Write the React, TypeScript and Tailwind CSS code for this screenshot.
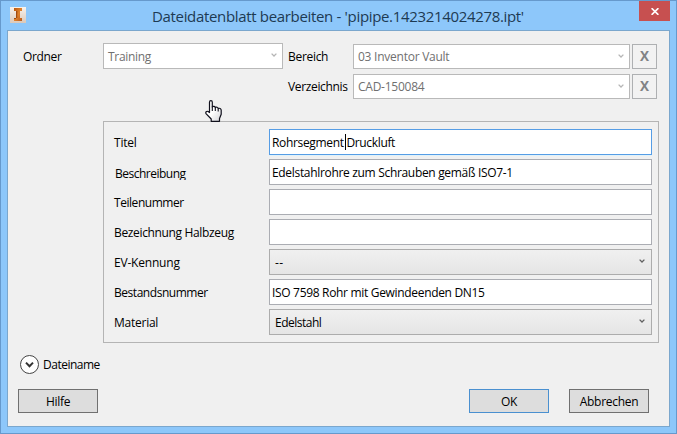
import React from "react";

function Chevron({ className }: { className: string }) {
  return (
    <svg className={`h-1 w-[6px] shrink-0 ${className}`} viewBox="0 0 6 4" fill="none" stroke="currentColor" strokeWidth="1.3">
      <path d="M0.6 0.6 3 3 5.4 0.6" />
    </svg>
  );
}

function DisabledSelect({ value, className, tracking }: { value: string; className: string; tracking: string }) {
  return (
    <div className={`flex items-center justify-between border border-[#b9b9b9] bg-white pr-[5px] pl-1 text-[#707070] ${className}`}>
      <span className={tracking}>{value}</span>
      <Chevron className="-translate-y-px text-[#b5b5b5]" />
    </div>
  );
}

function ClearButton() {
  return (
    <button className="ml-0.5 flex h-[25px] w-[25px] items-center justify-center border border-[#aeb0b2] bg-[#f2f2f2] pb-0.5 text-[13.5px] font-bold text-[#808285]">
      X
    </button>
  );
}

type Row = { label: string; labelClass: string; value: React.ReactNode; valueClass: string; kind: "focus" | "text" | "select" };

const rows: Row[] = [
  {
    label: "Titel",
    labelClass: "pt-0.5 tracking-[-0.2px]",
    value: (
      <>
        Rohrsegment <span className="relative">
          <i className="absolute top-0 -left-px h-4 w-px bg-black" />
          Druckluft
        </span>
      </>
    ),
    valueClass: "tracking-[-0.34px]",
    kind: "focus",
  },
  { label: "Beschreibung", labelClass: "mt-0.5 ml-px h-[14px] overflow-hidden leading-4 tracking-[-0.5px]", value: "Edelstahlrohre zum Schrauben gemäß ISO7-1", valueClass: "tracking-[-0.32px]", kind: "text" },
  { label: "Teilenummer", labelClass: "pt-0.5 tracking-[-0.45px]", value: "", valueClass: "", kind: "text" },
  { label: "Bezeichnung Halbzeug", labelClass: "pt-0.5 tracking-[-0.35px]", value: "", valueClass: "", kind: "text" },
  { label: "EV-Kennung", labelClass: "pt-0.5 tracking-[-0.2px]", value: "--", valueClass: "tracking-[0.5px]", kind: "select" },
  { label: "Bestandsnummer", labelClass: "pt-0.5 tracking-[-0.46px]", value: "ISO 7598 Rohr mit Gewindeenden DN15", valueClass: "tracking-[-0.32px]", kind: "text" },
  { label: "Material", labelClass: "pt-0.5 tracking-[-0.25px]", value: "Edelstahl", valueClass: "tracking-[-0.5px]", kind: "select" },
];

const fieldStyle = {
  focus: "border-[#569de5] bg-white pl-0.5 shadow-[0_1px_0_#e0f2fa]",
  text: "border-[#abadb3] bg-white pl-0.5",
  select: "border-[#acacac] bg-linear-to-b from-[#f0f0f0] to-[#e5e5e5] pl-[5px] pr-[6px]",
};

function FieldRow({ row }: { row: Row }) {
  return (
    <div className="flex h-[26px] items-center">
      <div className="w-[155px] whitespace-nowrap">
        <div className={row.labelClass}>{row.label}</div>
      </div>
      <div className={`flex h-full w-[383px] items-center justify-between border whitespace-pre ${fieldStyle[row.kind]}`}>
        <span className={`pt-0.5 ${row.valueClass}`}>{row.value}</span>
        {row.kind === "select" && <Chevron className="-translate-y-px text-[#606060]" />}
      </div>
    </div>
  );
}

function InventorIcon() {
  return (
    <svg className="mt-1.5 ml-[9px] h-4 w-4 shrink-0" viewBox="0 0 16 16">
      <defs>
        <linearGradient id="tile" x1="0" y1="0" x2="0" y2="1">
          <stop offset="0" stopColor="#f8f3ee" />
          <stop offset="1" stopColor="#dcc8b8" />
        </linearGradient>
        <linearGradient id="beam" x1="0" y1="0" x2="1" y2="1">
          <stop offset="0" stopColor="#b8560f" />
          <stop offset="0.5" stopColor="#e0822c" />
          <stop offset="1" stopColor="#b9591a" />
        </linearGradient>
      </defs>
      <rect width="16" height="16" fill="url(#tile)" />
      <path d="M4 1h8v3h-2v7h2v3H4v-3h2V4H4z" fill="url(#beam)" />
      <path d="M6 4h1.3v7H6zM4 11h2v1H4z" fill="#a04a10" />
    </svg>
  );
}

function HandCursor() {
  return (
    <svg className="absolute top-[99px] left-[204px] h-[22px] w-[17px]" viewBox="0 0 17 22">
      <defs>
        <linearGradient id="hand" x1="0" y1="0" x2="1" y2="1">
          <stop offset="0.5" stopColor="#fff" />
          <stop offset="1" stopColor="#d2d2d6" />
        </linearGradient>
      </defs>
      <path
        d="M4.5 12.5V2.2C4.5.2 7.3.2 7.3 2.2V7C8 5.8 10.2 6.2 10.3 7.6 11.2 6.6 13.1 7.2 13.2 8.6 14.4 7.8 16.2 8.6 16.2 10.2V14.2L14.5 18.5V21.3H6.2V19L1.2 13.8C.1 12.2 1.6 10.6 3.1 11.6Z"
        fill="url(#hand)"
        stroke="#10101c"
        strokeWidth="1.2"
        strokeLinejoin="round"
      />
      <path d="M7.3 6.5V11M10.3 7.5V11M13.2 8.5V11.5" stroke="#10101c" strokeWidth="1.1" />
    </svg>
  );
}

export default function App() {
  return (
    <div className="relative flex h-[434px] w-[677px] flex-col border border-[#6699cc] bg-[#8dc7fa] font-['Open_Sans','Noto_Sans',sans-serif] text-[12px] leading-4 text-black">
      <header className="flex h-[29px] shrink-0">
        <InventorIcon />
        <h1 className="flex-1 pt-[5px] pl-[126px] text-[15px] leading-5 tracking-[-0.33px] whitespace-nowrap text-[#1d3a53]">
          Dateidatenblatt bearbeiten - 'pipipe.1423214024278.ipt'
        </h1>
        <button className="mr-[6px] flex h-5 w-[31px] items-center justify-center bg-[#c75050]">
          <svg className="h-[7px] w-2" viewBox="0 0 8 7" stroke="#fff" strokeWidth="1.7">
            <path d="M.6.2 7.4 6.8M7.4.2.6 6.8" />
          </svg>
        </button>
      </header>

      <main className="mx-[6px] flex h-[397px] w-[663px] flex-col border border-[#7ba7cd] bg-[#f0f0f0]">
        <section className="flex h-[90px] pt-3 pl-[15px]">
          <div className="w-20 pt-[6px] tracking-[-0.35px]">Ordner</div>
          <DisabledSelect value="Training" className="h-[26px] w-[180px]" tracking="pt-0.5 tracking-[-0.3px]" />
          <div className="ml-[5px] flex flex-col gap-[5px] pt-px">
            <div className="flex h-[25px] items-center">
              <div className="w-[65px] tracking-[-0.3px] whitespace-nowrap">Bereich</div>
              <DisabledSelect value="03 Inventor Vault" className="h-[25px] w-[277px]" tracking="tracking-[-0.25px]" />
              <ClearButton />
            </div>
            <div className="flex h-[25px] items-center">
              <div className="w-[65px] tracking-[-0.35px] whitespace-nowrap">Verzeichnis</div>
              <DisabledSelect value="CAD-150084" className="h-[25px] w-[277px]" tracking="tracking-[-0.25px]" />
              <ClearButton />
            </div>
          </div>
        </section>

        <section className="ml-[95px] flex h-[222px] w-[556px] flex-col gap-1 border border-[#b4b4b4] pt-[7px] pl-[10px]">
          {rows.map((row) => (
            <FieldRow key={row.label} row={row} />
          ))}
        </section>

        <div className="mt-[11px] ml-[11px] flex h-5 items-center gap-1">
          <svg className="h-5 w-5" viewBox="0 0 20 20" fill="none">
            <circle cx="10.5" cy="10.5" r="9" fill="#fff" stroke="#444" />
            <path d="m7 8.6 3.5 3.6L14 8.6" stroke="#333" strokeWidth="2" />
          </svg>
          <span className="pt-0.5 tracking-[-0.5px]">Dateiname</span>
        </div>

        <footer className="mt-[15px] ml-[10px] flex h-6">
          <button className="w-20 border border-[#707070] bg-[#dddddd] pt-0.5 tracking-[-0.3px]">Hilfe</button>
          <button className="ml-[371px] w-20 border border-[#4a90d0] bg-[#dddddd] pt-0.5 tracking-[-0.3px]">OK</button>
          <button className="ml-5 w-20 border border-[#707070] bg-[#dddddd] pt-0.5 tracking-[-0.3px]">Abbrechen</button>
        </footer>
      </main>
      <HandCursor />
    </div>
  );
}
